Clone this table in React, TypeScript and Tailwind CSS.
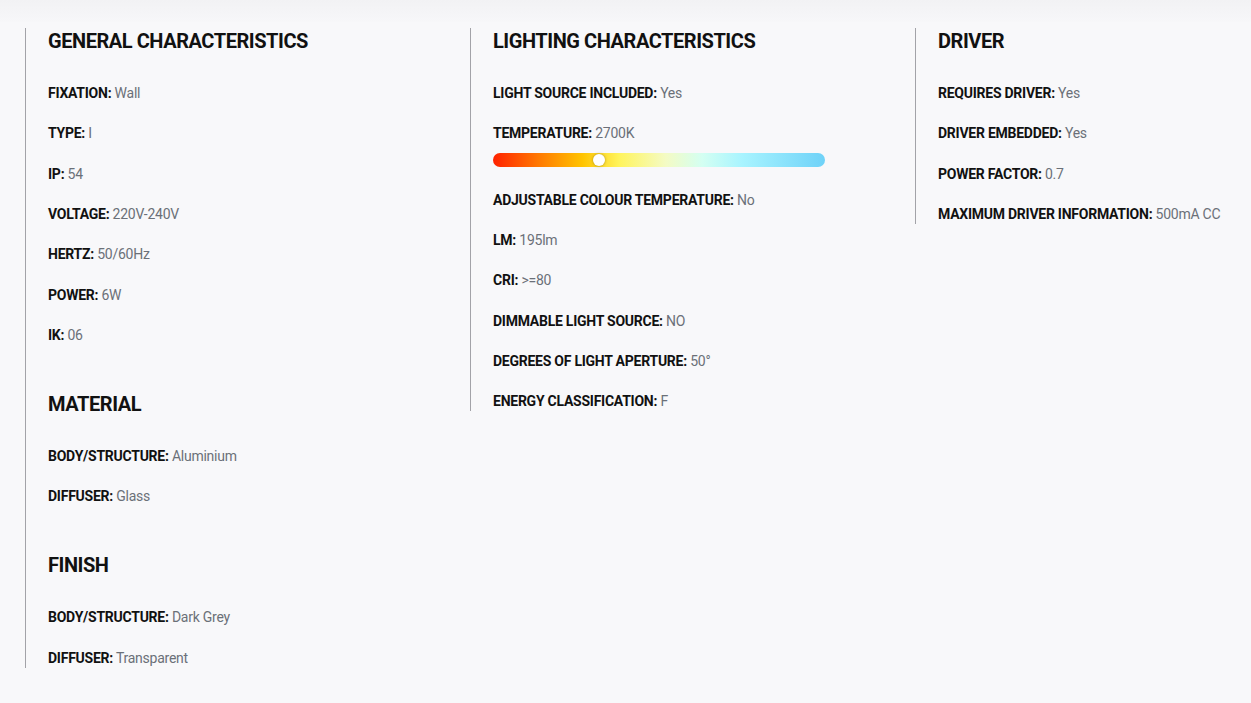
import React from "react";

type Spec = [string, string];

const general: Spec[] = [
  ["FIXATION", "Wall"],
  ["TYPE", "I"],
  ["IP", "54"],
  ["VOLTAGE", "220V-240V"],
  ["HERTZ", "50/60Hz"],
  ["POWER", "6W"],
  ["IK", "06"],
];

const material: Spec[] = [
  ["BODY/STRUCTURE", "Aluminium"],
  ["DIFFUSER", "Glass"],
];

const finish: Spec[] = [
  ["BODY/STRUCTURE", "Dark Grey"],
  ["DIFFUSER", "Transparent"],
];

const driver: Spec[] = [
  ["REQUIRES DRIVER", "Yes"],
  ["DRIVER EMBEDDED", "Yes"],
  ["POWER FACTOR", "0.7"],
  ["MAXIMUM DRIVER INFORMATION", "500mA CC"],
];

const Row = ({ label, value }: { label: string; value: string }) => (
  <p className="text-[14px] leading-[20px] tracking-[-0.25px]">
    <span className="font-bold text-[#111]">{label}:</span>{" "}
    <span className="text-[#6b7078]">{value}</span>
  </p>
);

const Heading = ({ children }: { children: React.ReactNode }) => (
  <h3 className="text-[20px] leading-[26px] font-bold text-[#111] tracking-[-0.45px] mb-[29px]">
    {children}
  </h3>
);

const Group = ({ title, rows }: { title: string; rows: Spec[] }) => (
  <div>
    <Heading>{title}</Heading>
    <div className="flex flex-col gap-[20.33px]">
      {rows.map(([l, v], i) => (
        <Row key={i} label={l} value={v} />
      ))}
    </div>
  </div>
);

// barra de temperatura de cor
const TempBar = () => (
  <div className="relative mt-[10px] mb-[2px] h-[14px] w-[332px] rounded-full bg-[linear-gradient(90deg,#ff2200_0%,#ff7a00_14%,#ffc400_27%,#fff45c_38%,#f4fbc4_52%,#d4fff2_63%,#a8f4ff_75%,#6fd2f8_100%)]">
    <span className="absolute top-[1px] left-[100px] h-[12px] w-[12px] rounded-full bg-white shadow-[0_0_3px_rgba(0,0,0,0.35)]" />
  </div>
);

export default function App() {
  return (
    <div
      className="min-h-[703px] w-full bg-[#f8f8fa]"
      style={{ fontFamily: "Roboto, 'Liberation Sans', sans-serif" }}
    >
      <div className="h-[22px] bg-[linear-gradient(180deg,#f2f2f4,#f7f7f9)]" />
      <div className="grid grid-cols-[445px_445px_336px] pl-[25px] pt-[6px]">
        {/* col 1 */}
        <div className="self-start border-l border-[#a3a3a8] pl-[22px] flex flex-col gap-[46px]">
          <Group title="GENERAL CHARACTERISTICS" rows={general} />
          <Group title="MATERIAL" rows={material} />
          <Group title="FINISH" rows={finish} />
        </div>

        {/* col 2 */}
        <div className="self-start border-l border-[#a3a3a8] pl-[22px]">
          <Heading>LIGHTING CHARACTERISTICS</Heading>
          <div className="flex flex-col gap-[20.33px]">
            <Row label="LIGHT SOURCE INCLUDED" value="Yes" />
            <div>
              <Row label="TEMPERATURE" value="2700K" />
              <TempBar />
            </div>
            <Row label="ADJUSTABLE COLOUR TEMPERATURE" value="No" />
            <Row label="LM" value="195lm" />
            <Row label="CRI" value=">=80" />
            <Row label="DIMMABLE LIGHT SOURCE" value="NO" />
            <Row label="DEGREES OF LIGHT APERTURE" value="50°" />
            <Row label="ENERGY CLASSIFICATION" value="F" />
          </div>
        </div>

        {/* col 3 */}
        <div className="self-start border-l border-[#a3a3a8] pl-[22px]">
          <Group title="DRIVER" rows={driver} />
        </div>
      </div>
    </div>
  );
}
